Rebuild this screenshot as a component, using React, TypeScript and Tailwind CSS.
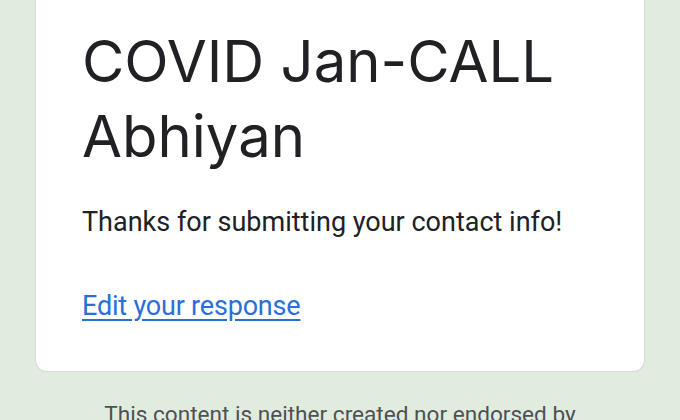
export default function App() {
  return (
    <div className="w-[680px] h-[420px] overflow-hidden bg-[#e1ecdf] font-['Roboto',sans-serif]">
      {/* confirmation card */}
      <div className="mx-[35px] bg-white border-x border-b border-[#d5d9d4] rounded-b-[12px] px-[46px] pt-[24px] pb-[47px]">
        <h1 className="font-['Inter','Open_Sans',sans-serif] text-[58px] leading-[75px] text-[#202124] font-normal">
          COVID Jan-CALL Abhiyan
        </h1>
        <p className="mt-[30px] text-[27px] leading-[36px] text-[#202124]">
          Thanks for submitting your contact info!
        </p>
        <a href="#" className="block mt-[48px] text-[27px] leading-[36px] tracking-[-0.2px] text-[#2a6fd6] underline underline-offset-[4px]">
          Edit your response
        </a>
      </div>
      <p className="mt-[27px] px-[96px] text-center text-[22.6px] leading-[32px] text-[#4d5156]">
        This content is neither created nor endorsed by Google.
      </p>
    </div>
  )
}
